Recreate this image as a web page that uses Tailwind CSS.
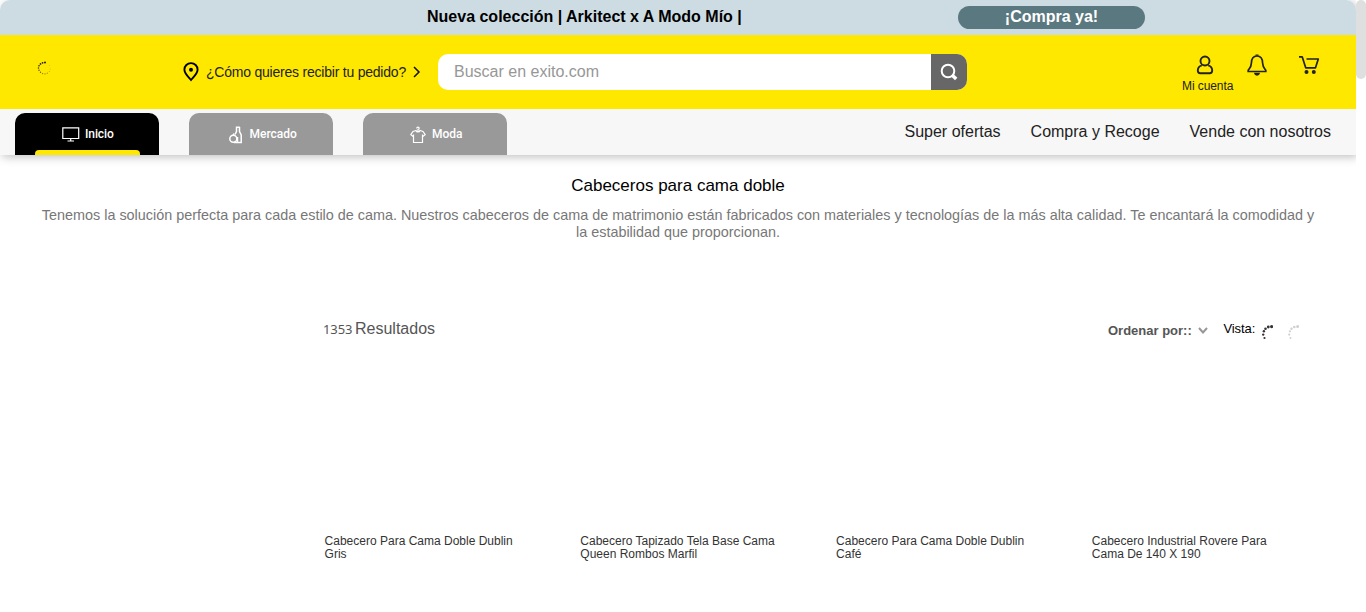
<!DOCTYPE html>
<html lang="es">
<head>
<meta charset="utf-8">
<title>Cabeceros para cama doble</title>
<script src="https://cdn.jsdelivr.net/npm/@tailwindcss/browser@4"></script>
</head>
<body class="h-[612px] overflow-hidden bg-white font-['Liberation_Sans',Arial,sans-serif] text-black">
<div class="flex h-[612px]">
<div class="w-[1356px] shrink-0 overflow-x-clip">
  <header class="h-[155px] rounded-t-[10px] bg-[#f7f7f7] shadow-[2px_2px_10px_rgba(0,0,0,0.25)]">
    <div class="flex h-[35px] rounded-t-[10px] bg-[#cddce3] text-[16px] font-bold leading-[22px]">
      <p class="ml-[427px] mt-[6px] w-[531px] whitespace-nowrap">Nueva colección | Arkitect x A Modo Mío |</p>
      <a class="mt-[6px] h-[23px] w-[187px] rounded-full bg-[#5a7880] text-center text-white">¡Compra ya!</a>
    </div>
    <div class="flex h-[74px] bg-[#ffe800]">
      <svg class="ml-[37px] mt-[26px] h-[14px] w-[14px]" viewBox="0 0 14 14" fill="#222">
        <circle cx="8" cy="1.5" r="1"/><circle cx="5.6" cy="1.8" r=".9"/><circle cx="3.5" cy="2.9" r=".85"/><circle cx="2" cy="4.8" r=".8"/><circle cx="1.5" cy="7" r=".75" opacity=".9"/><circle cx="2" cy="9.3" r=".7" opacity=".8"/><circle cx="3.5" cy="11.3" r=".7" opacity=".7"/><circle cx="5.6" cy="12.6" r=".65" opacity=".6"/><circle cx="8" cy="12.9" r=".6" opacity=".55"/><circle cx="10.3" cy="12.2" r=".6" opacity=".45"/><circle cx="12.3" cy="10.5" r=".5" opacity=".35"/><circle cx="13.2" cy="8" r=".5" opacity=".25"/><circle cx="12.6" cy="4.5" r=".5" opacity=".2"/>
      </svg>
      <div class="ml-[132px] mt-[27px] flex h-[20px] w-[255px] items-center">
        <svg class="h-[20px] w-[16px] shrink-0" viewBox="0 0 16 20" fill="none" stroke="#000" stroke-width="1.9"><path d="M8 18C5.500 15 1.400 11.400 1.400 7.700a6.600 6.600 0 0 1 13.200 0C14.600 11.400 10.500 15 8 18Z"/><circle cx="8" cy="7.700" r="2" fill="#000" stroke="none"/></svg>
        <span class="ml-[7px] w-[201px] shrink-0 whitespace-nowrap text-[14px] leading-[20px] tracking-[-0.22px] text-[#222]">¿Cómo quieres recibir tu pedido?</span>
        <svg class="ml-[6px] h-[12px] w-[8px] shrink-0" viewBox="0 0 8 12" fill="none" stroke="#111" stroke-width="1.5"><path d="M1 1l5 5-5 5"/></svg>
      </div>
      <div class="mt-[19px] flex h-[36px] w-[529px] overflow-hidden rounded-[10px] bg-white">
        <span class="w-[493px] pl-[16px] text-[16px] leading-[36px] text-[#979797]">Buscar en exito.com</span>
        <span class="flex w-[36px] items-center justify-center bg-[#676767]"><svg class="h-[18px] w-[18px]" viewBox="0 0 18 18" fill="none" stroke="#fff"><circle cx="8" cy="8" r="6.300" stroke-width="2"/><path d="M12.500 12.500L16.200 16" stroke-width="3.500"/></svg></span>
      </div>
      <div class="ml-[215px] mt-[20px] w-[52px]">
        <svg class="ml-[14px] h-[20px] w-[18px]" viewBox="0 0 18 20" fill="none" stroke="#222" stroke-width="1.900"><circle cx="9" cy="6" r="4.500"/><path d="M5.800 10.400C3 11.200 1.800 13 1.800 15.500c0 2 .8 2.700 2.500 2.700h9.400c1.700 0 2.500-.7 2.500-2.700 0-2.500-1.200-4.300-4-5.100"/></svg>
        <span class="mt-[4px] block whitespace-nowrap text-[12px] leading-[14px] tracking-[-0.08px] text-[#222]">Mi cuenta</span>
      </div>
      <svg class="ml-[13px] mt-[19px] h-[22px] w-[20px]" viewBox="0 0 20 22" fill="none" stroke="#222" stroke-width="1.700"><path d="M10 2C6 2 4.500 5 4.400 9c-.1 4-1.500 5-3.200 7.200v1.300h17.600v-1.300C17 14 15.700 13 15.600 9 15.500 5 14 2 10 2Z"/><path d="M8.500 1.200h3M7.800 19.500c.3 2 4.100 2 4.400 0Z" fill="#222" stroke-width="1.300"/></svg>
      <svg class="ml-[32px] mt-[20px] h-[20px] w-[21px]" viewBox="0 0 21 20" fill="none" stroke="#222" stroke-width="1.700"><path d="M0 1.800h3.200l3.500 11H16.500L19.300 4H7.500" stroke-linejoin="round"/><circle cx="7.500" cy="17" r="2" fill="#222" stroke="none"/><circle cx="14.800" cy="17" r="2" fill="#222" stroke="none"/></svg>
    </div>
    <div class="flex h-[46px] justify-between pl-[15px]">
      <nav class="flex gap-[30px] pt-[4px] font-[Roboto,sans-serif] text-[12px] font-medium leading-[42px] text-white">
        <a class="flex h-[42px] w-[144px] flex-col rounded-t-[10px] bg-black">
          <span class="flex h-[37px] pl-[47px]"><svg class="mt-[14px] h-[15px] w-[18px]" viewBox="0 0 18 15" fill="none" stroke="#fff" stroke-width="1.200"><path d="M.8.900h15.900v10.600H.8ZM8.700 11.500v2.300M5.500 14h6.500"/></svg><span class="ml-[5px] tracking-[-0.1px]">Inicio</span></span>
          <span class="mx-[20px] h-[5px] w-[105px] rounded-t-[4px] bg-[#ffe800]"></span>
        </a>
        <a class="flex h-[42px] w-[144px] rounded-t-[10px] bg-[#999] pl-[40px]"><svg class="mt-[13px] h-[18px] w-[14px]" viewBox="0 0 14 18" fill="none" stroke="#fff" stroke-width="1.500"><path d="M6.800 1.300h4M7.500 1v4.500L6 8.500M10.500 1v4.500l1.700 3.500v7.500H5"/><circle cx="4.300" cy="12.700" r="3.500"/><path d="M4 9.500L5 7.500M8.500 16V11"/></svg><span class="ml-[6.500px]">Mercado</span></a>
        <a class="flex h-[42px] w-[144px] rounded-t-[10px] bg-[#999] pl-[47px]"><svg class="mt-[13px] h-[18px] w-[16px]" viewBox="0 0 16 18" fill="none" stroke="#fff" stroke-width="1.200"><path d="M6 4.500L3 5.500.8 8.700l2.700 2V16.500h9v-5.800l2.700-2L13 5.500l-3-1C9.500 6.500 6.500 6.500 6 4.500ZM8 5.800V3.500c1.500-.3 1.500-2.300 0-2.300-.8 0-1.300.5-1.300 1.200M3.500 10.700V8.500M12.500 10.700V8.500"/></svg><span class="ml-[6px]">Moda</span></a>
      </nav>
      <nav class="flex w-[451.500px] justify-between pr-[25px] pt-[12px] text-[16px] leading-[22px] text-[#222]"><a>Super ofertas</a><a>Compra y Recoge</a><a>Vende con nosotros</a></nav>
    </div>
  </header>
  <main>
    <section class="h-[162px] px-[30px] pt-[20px] text-center">
      <h1 class="text-[17px] leading-[22px]">Cabeceros para cama doble</h1>
      <p class="mt-[10px] whitespace-nowrap text-[14.4px] leading-[17px] text-[#777]">Tenemos la solución perfecta para cada estilo de cama. Nuestros cabeceros de cama de matrimonio están fabricados con materiales y tecnologías de la más alta calidad. Te encantará la comodidad y<br>la estabilidad que proporcionan.</p>
    </section>
    <section class="flex h-[216px] pl-[323px] text-[#555]">
      <p class="flex w-[785px] pt-px text-[16px] leading-[22px]"><span class="w-[32px] font-['Noto_Sans',sans-serif] text-[13px] tracking-[-0.1px]">1353</span><span>Resultados</span></p>
      <p class="w-[90px] whitespace-nowrap text-[13px] font-bold leading-[27px]">Ordenar por::</p>
      <svg class="mt-[10px] h-[8px] w-[11px]" viewBox="0 0 11 8" fill="none" stroke="#979797" stroke-width="2"><path d="M1 1l4 4.500L9 1"/></svg>
      <span class="ml-[14.500px] w-[37.500px] pt-px text-[13px] leading-[22px] tracking-[-0.1px] text-black">Vista:</span>
      <svg class="mt-[7px] h-[16px] w-[12px]" viewBox="0 0 12 16" fill="#333"><circle cx="10.600" cy="2.600" r="1.600"/><circle cx="7.300" cy="3" r="1.400"/><circle cx="4.500" cy="4.700" r="1.300"/><circle cx="2.900" cy="7.300" r="1.200"/><circle cx="2.200" cy="10.600" r="1.200"/><circle cx="3.500" cy="14" r="1.100"/></svg>
      <svg class="ml-[14px] mt-[7px] h-[16px] w-[12px]" viewBox="0 0 12 16" fill="#d0d0d0"><circle cx="10.600" cy="2.600" r="1.500"/><circle cx="7.300" cy="3" r="1.300"/><circle cx="4.500" cy="4.700" r="1.200"/><circle cx="2.900" cy="7.300" r="1.100"/><circle cx="2.200" cy="10.600" r="1.100"/><circle cx="3.500" cy="14" r="1"/></svg>
    </section>
    <section class="ml-[324.600px] grid w-[1023px] grid-cols-4 pt-[2px] text-[12px] leading-[13px] text-[#333]">
      <p>Cabecero Para Cama Doble Dublin<br>Gris</p>
      <p>Cabecero Tapizado Tela Base Cama<br>Queen Rombos Marfil</p>
      <p>Cabecero Para Cama Doble Dublin<br>Café</p>
      <p>Cabecero Industrial Rovere Para<br>Cama De 140 X 190</p>
    </section>
  </main>
</div>
<div class="h-[79px] w-[10px] rounded-full bg-[#dfdfdf]"></div>
</div>
</body>
</html>
